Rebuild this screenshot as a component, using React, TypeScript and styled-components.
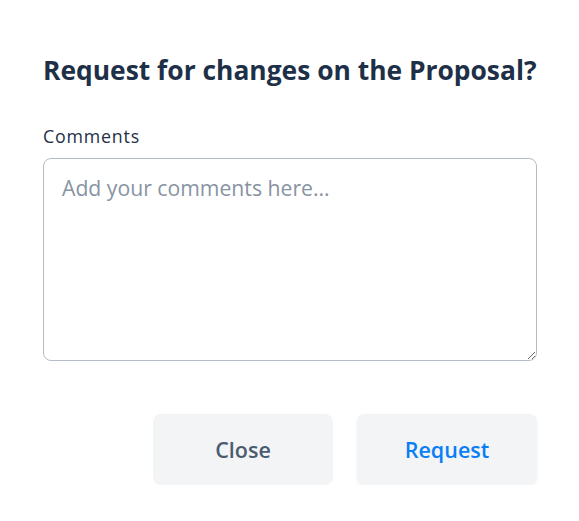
import React from "react";
import styled, { createGlobalStyle } from "styled-components";

const Global = createGlobalStyle`
  html, body { margin: 0; padding: 0; background: #ffffff; }
  * { box-sizing: border-box; }
`;

const Dialog = styled.div`
  width: 579px;
  padding: 52px 42px 0 43px;
  display: flex;
  flex-direction: column;
  font-family: "Open Sans", Lato, sans-serif;
`;

const Title = styled.h2`
  margin: 0;
  font-size: 26.4px;
  line-height: 36px;
  font-weight: 700;
  color: #1e3047;
  white-space: nowrap;
`;

const Label = styled.label`
  margin-top: 36px;
  font-size: 17.8px;
  line-height: 24px;
  font-weight: 500;
  color: #1e3047;
  letter-spacing: 0.8px;
`;

const Area = styled.textarea`
  margin-top: 10px;
  width: 494px;
  height: 203px;
  border: 1px solid #b5bcc6;
  border-radius: 8px;
  padding: 15px 18px;
  font-family: "Open Sans", sans-serif;
  font-size: 21.2px;
  font-weight: 400;
  line-height: 28px;
  color: #1e3047;
  outline: none;
  resize: vertical;
  &::placeholder { color: #8893a3; }
`;

const Actions = styled.div`
  margin-top: 53px;
  display: flex;
  justify-content: flex-end;
  gap: 24px;
  width: 494px;
`;

const Button = styled.button<{ $primary?: boolean }>`
  width: 180px;
  height: 71px;
  border: none;
  border-radius: 8px;
  background: #f3f4f6;
  font-family: "Open Sans", sans-serif;
  font-size: 21.5px;
  font-weight: 600;
  color: ${(p) => (p.$primary ? "#0a7ef5" : "#4a5b70")};
  box-shadow: ${(p) => (p.$primary ? "0 1px 3px rgba(0,0,0,0.06)" : "none")};
  cursor: pointer;
`;

export default function App() {
  return (
    <>
      <Global />
      <Dialog>
        <Title>Request for changes on the Proposal?</Title>
        <Label htmlFor="c">Comments</Label>
        <Area id="c" placeholder="Add your comments here..." />
        <Actions>
          <Button>Close</Button>
          <Button $primary>Request</Button>
        </Actions>
      </Dialog>
    </>
  );
}
